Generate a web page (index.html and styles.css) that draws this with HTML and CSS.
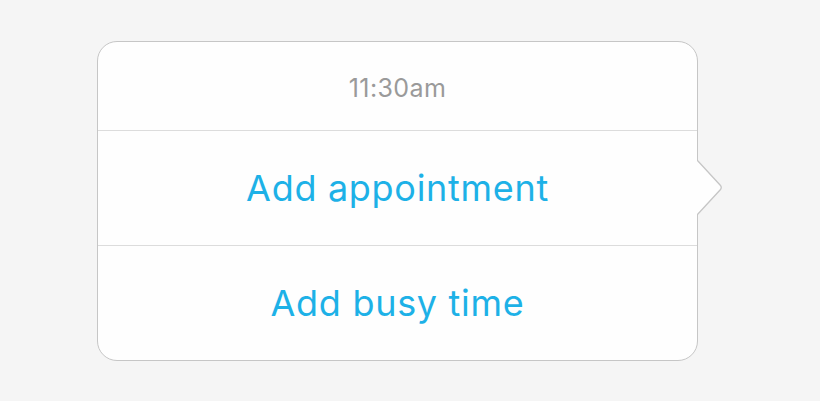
FILE: index.html
```html
<!DOCTYPE html>
<html lang="en">
<head>
    <meta charset="UTF-8">
    <title>Time slot menu</title>
    <link rel="stylesheet" href="styles.css">
</head>
<body>
    <div class="popover">
        <div class="popover-title">11:30am</div>
        <button class="popover-action">Add appointment</button>
        <button class="popover-action">Add busy time</button>
        <svg class="popover-arrow" width="27" height="58" viewBox="0 0 27 58">
            <path d="M0 1 L23.5 26.5 Q25 28.5 23.5 30.5 L0 56 Z" fill="#fefefe"/>
            <path d="M0 1 L23.5 26.5 Q25 28.5 23.5 30.5 L0 56" fill="none" stroke="#c6c6c6" stroke-width="1.3"/>
        </svg>
    </div>
</body>
</html>
```

FILE: styles.css
```css
* {
    margin: 0;
    padding: 0;
    box-sizing: border-box;
    font-family: 'Inter', 'Noto Sans', sans-serif;
}

body {
    background: #f5f5f5;
    min-height: 100vh;
}

.popover {
    position: relative;
    margin: 41px 0 0 97px;
    width: 601px;
    height: 320px;
    background: #fefefe;
    border: 1px solid #c6c6c6;
    border-radius: 20px;
    display: flex;
    flex-direction: column;
}

.popover-title {
    height: 88px;
    display: flex;
    align-items: center;
    justify-content: center;
    font-size: 25px;
    color: #9a9a9a;
    padding-top: 4px;
    letter-spacing: 0.4px;
}

.popover-action {
    flex: 1;
    border: none;
    border-top: 1px solid #dcdcdc;
    background: none;
    color: #1db1e7;
    font-size: 36px;
    cursor: pointer;
    letter-spacing: 0.7px;
}

.popover-arrow {
    position: absolute;
    left: 100%;
    top: 117px;
}
```
